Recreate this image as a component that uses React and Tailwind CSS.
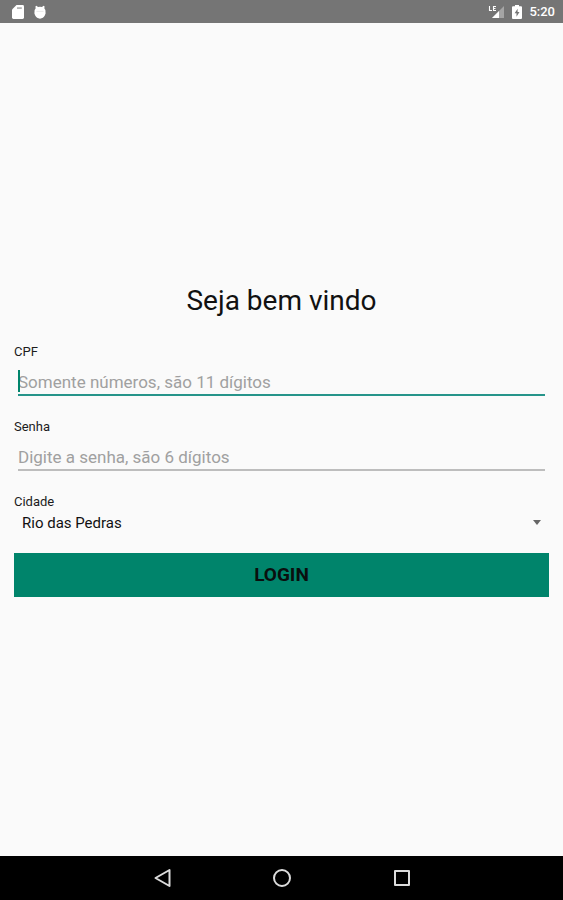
import { useState } from "react";

const SdCardIcon = () => (
  <svg width="12" height="14" viewBox="0 0 12 14" className="fill-white" aria-hidden="true">
    <path d="M4.5 0H10.600Q12 0 12 1.400V12.600Q12 14 10.600 14H1.400Q0 14 0 12.600V4.500Z" />
    <path d="M5 2.200h4.800v1.800H5z" fill="#b5b5b5" />
  </svg>
);

const DebugIcon = () => (
  <svg width="12" height="14" viewBox="0 0 12 14" className="fill-white" aria-hidden="true">
    <path d="M1.500 1.200 2.500.8 4 2.100A6 6 0 0 1 8 2.100L9.500.8 10.500 1.200 10.400 3.600 11.400 5 11.600 8.500 10.800 10.600A5.300 5.300 0 0 1 1.200 10.600L.4 8.500.6 5 1.600 3.600Z" />
    <path d="M2.500 6.400H9.500" stroke="#d8d8d8" strokeWidth="0.600" />
  </svg>
);

const SignalIcon = () => (
  <svg width="17" height="14" viewBox="0 0 17 14" aria-hidden="true">
    <path d="M16 1V13H4Z" fill="#ffffff" fillOpacity="0.350" />
    <path d="M11 6V13H4Z" fill="#ffffff" />
    <path d="M1.500 1V5.500H4M8 1.500H5.500V5.500H8M5.500 3.500H7.500" fill="none" stroke="#ffffff" strokeWidth="1.100" />
  </svg>
);

const BatteryIcon = () => (
  <svg width="10" height="14" viewBox="0 0 10 14" aria-hidden="true">
    <path d="M3 0H7V1.300H9Q10 1.300 10 2.300V13Q10 14 9 14H1Q0 14 0 13V2.300Q0 1.300 1 1.300H3Z" fill="#ffffff" />
    <path d="M5.600 3.800 2.600 8.300H4.500V11.700L7.500 7.100H5.600Z" fill="#757575" />
  </svg>
);

const StatusBar = () => (
  <header className="flex h-[23px] shrink-0 items-center justify-between bg-[#757575] px-2 text-white">
    <div className="flex items-center gap-[10px] pl-1">
      <SdCardIcon />
      <DebugIcon />
    </div>
    <div className="flex items-center gap-[7px]">
      <SignalIcon />
      <BatteryIcon />
      <span className="text-[13px] leading-4 font-medium">5:20</span>
    </div>
  </header>
);

const NavigationBar = () => (
  <nav className="flex h-[44px] shrink-0 items-center justify-center gap-[96px] bg-black text-[#dcdcdc]">
    <button type="button" aria-label="Voltar" className="flex size-6 items-center justify-center">
      <svg width="18" height="20" viewBox="0 0 18 20" fill="none" stroke="currentColor" strokeWidth="2" strokeLinejoin="round">
        <path d="M16.500 2V18L2.500 10Z" />
      </svg>
    </button>
    <button type="button" aria-label="Início" className="flex size-6 items-center justify-center">
      <svg width="20" height="20" viewBox="0 0 20 20" fill="none" stroke="currentColor" strokeWidth="2">
        <circle cx="10" cy="10" r="8" />
      </svg>
    </button>
    <button type="button" aria-label="Recentes" className="flex size-6 items-center justify-center">
      <svg width="18" height="18" viewBox="0 0 18 18" fill="none" stroke="currentColor" strokeWidth="2" strokeLinejoin="round">
        <rect x="2" y="2" width="14" height="14" />
      </svg>
    </button>
  </nav>
);

const Field = ({ id, label, active, ...props }) => (
  <div>
    <label htmlFor={id} className="block text-[13px] leading-4 text-[#1c1c1c]">
      {label}
    </label>
    <div className="relative px-1">
      <input
        id={id}
        className={`block h-9 w-full bg-transparent pt-[10px] text-[17px] leading-6 text-black outline-none placeholder:text-[#a0a0a0] ${
          active ? "border-b-2 border-[#26948a]" : "border-b-2 border-[#bdbdbd]"
        }`}
        {...props}
      />
      {active && <span className="absolute top-[10px] left-1 h-[22px] w-[2px] bg-[#00846b]" />}
    </div>
  </div>
);

const App = () => {
  const [cpf, setCpf] = useState("");
  const [senha, setSenha] = useState("");

  return (
    <div className="flex min-h-screen flex-col bg-[#fafafa] font-['Roboto',sans-serif]">
      <StatusBar />
      <main className="flex grow flex-col justify-center px-[14px]">
        <h1 className="text-center text-[28px] leading-[38px] text-[#111111]">Seja bem vindo</h1>
        <form className="mt-6" onSubmit={(e) => e.preventDefault()}>
          <div className="flex flex-col gap-[23px]">
            <Field
              id="cpf"
              label="CPF"
              type="text"
              inputMode="numeric"
              maxLength={11}
              placeholder="Somente números, são 11 dígitos"
              value={cpf}
              onChange={(e) => setCpf(e.target.value)}
              active
            />
            <Field
              id="senha"
              label="Senha"
              type="password"
              maxLength={6}
              placeholder="Digite a senha, são 6 dígitos"
              value={senha}
              onChange={(e) => setSenha(e.target.value)}
            />
            <div>
              <label htmlFor="cidade" className="block text-[13px] leading-4 text-[#1c1c1c]">
                Cidade
              </label>
              <div className="relative">
                <select
                  id="cidade"
                  className="block h-[26px] w-full appearance-none bg-transparent px-2 text-[15px] text-[#111111] outline-none"
                >
                  <option>Rio das Pedras</option>
                </select>
                <svg
                  width="8"
                  height="5"
                  viewBox="0 0 8 5"
                  className="pointer-events-none absolute top-[10px] right-2 fill-[#666666]"
                  aria-hidden="true"
                >
                  <path d="M0 0H8L4 5Z" />
                </svg>
              </div>
            </div>
          </div>
          <button type="submit" className="mt-[17px] h-11 w-full bg-[#00846b] text-[19px] font-bold text-[#0a0f0e]">
            LOGIN
          </button>
        </form>
      </main>
      <NavigationBar />
    </div>
  );
};

export default App;
